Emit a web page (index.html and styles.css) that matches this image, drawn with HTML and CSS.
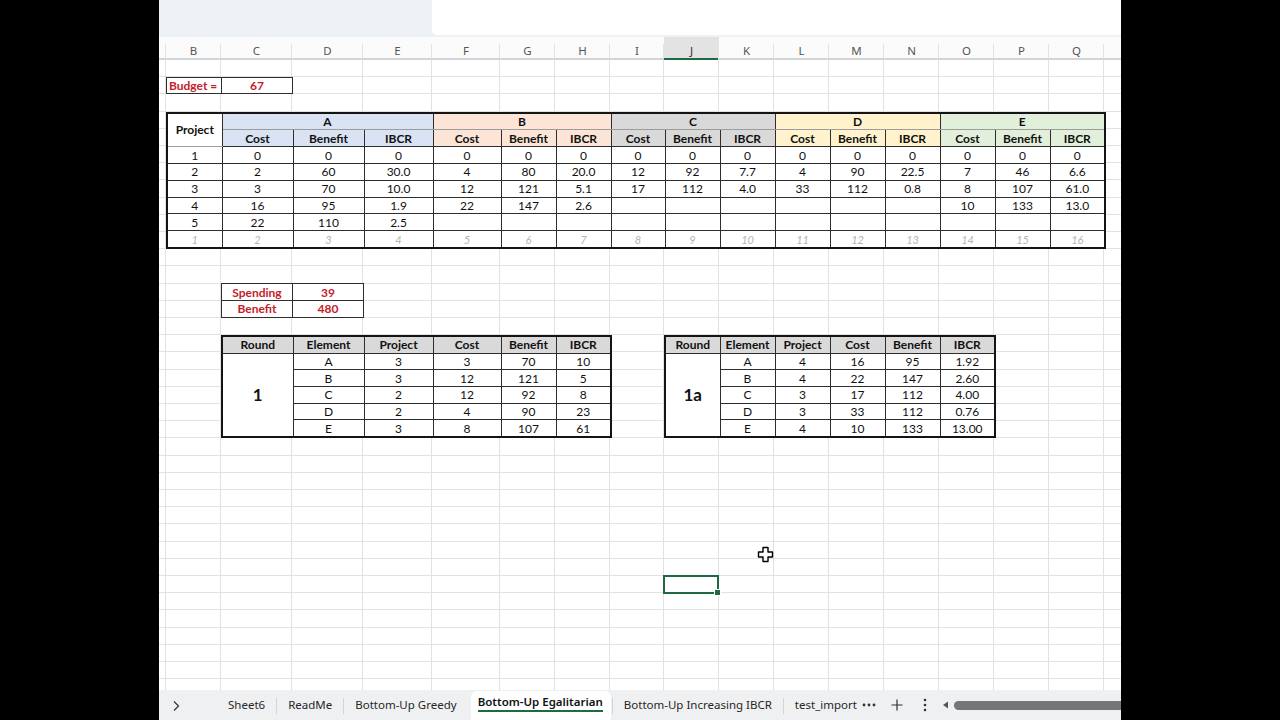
FILE: index.html
```html
<!DOCTYPE html>
<html>
<head>
<meta charset="utf-8">
<link rel="stylesheet" href="styles.css">
</head>
<body>
<div class="app">
  <div class="topbar"><div class="topbox"></div></div>
  <div class="colhead">
    <span></span><span>B</span><span>C</span><span>D</span><span>E</span><span>F</span><span>G</span><span>H</span><span>I</span><span class="cur">J</span><span>K</span><span>L</span><span>M</span><span>N</span><span>O</span><span>P</span><span>Q</span><span class="last"></span>
  </div>
  <div class="sheet">
    <table class="t budget">
      <colgroup><col class="w55"><col class="w71"></colgroup>
      <tr><td class="red left">Budget =</td><td class="red">67</td></tr>
    </table>

    <table class="t big main">
      <colgroup>
        <col class="w55"><col class="w71"><col class="w71"><col class="w69"><col class="w68"><col class="w55"><col class="w55"><col class="w54">
        <col class="w55"><col class="w55"><col class="w55"><col class="w55"><col class="w55"><col class="w55"><col class="w55"><col class="w55">
      </colgroup>
      <tr class="grp">
        <th rowspan="2" class="proj">Project</th>
        <th colspan="3" class="ca">A</th><th colspan="3" class="cb">B</th><th colspan="3" class="cc">C</th><th colspan="3" class="cd">D</th><th colspan="3" class="ce">E</th>
      </tr>
      <tr class="sub">
        <th class="ca">Cost</th><th class="ca">Benefit</th><th class="ca">IBCR</th>
        <th class="cb">Cost</th><th class="cb">Benefit</th><th class="cb">IBCR</th>
        <th class="cc">Cost</th><th class="cc">Benefit</th><th class="cc">IBCR</th>
        <th class="cd">Cost</th><th class="cd">Benefit</th><th class="cd">IBCR</th>
        <th class="ce">Cost</th><th class="ce">Benefit</th><th class="ce">IBCR</th>
      </tr>
      <tr><td>1</td><td>0</td><td>0</td><td>0</td><td>0</td><td>0</td><td>0</td><td>0</td><td>0</td><td>0</td><td>0</td><td>0</td><td>0</td><td>0</td><td>0</td><td>0</td></tr>
      <tr><td>2</td><td>2</td><td>60</td><td>30.0</td><td>4</td><td>80</td><td>20.0</td><td>12</td><td>92</td><td>7.7</td><td>4</td><td>90</td><td>22.5</td><td>7</td><td>46</td><td>6.6</td></tr>
      <tr><td>3</td><td>3</td><td>70</td><td>10.0</td><td>12</td><td>121</td><td>5.1</td><td>17</td><td>112</td><td>4.0</td><td>33</td><td>112</td><td>0.8</td><td>8</td><td>107</td><td>61.0</td></tr>
      <tr><td>4</td><td>16</td><td>95</td><td>1.9</td><td>22</td><td>147</td><td>2.6</td><td></td><td></td><td></td><td></td><td></td><td></td><td>10</td><td>133</td><td>13.0</td></tr>
      <tr><td>5</td><td>22</td><td>110</td><td>2.5</td><td></td><td></td><td></td><td></td><td></td><td></td><td></td><td></td><td></td><td></td><td></td><td></td></tr>
      <tr class="idx"><td>1</td><td>2</td><td>3</td><td>4</td><td>5</td><td>6</td><td>7</td><td>8</td><td>9</td><td>10</td><td>11</td><td>12</td><td>13</td><td>14</td><td>15</td><td>16</td></tr>
    </table>

    <table class="t spend">
      <colgroup><col class="w71"><col class="w71"></colgroup>
      <tr><td class="red">Spending</td><td class="red">39</td></tr>
      <tr><td class="red">Benefit</td><td class="red">480</td></tr>
    </table>

    <table class="t big round r1">
      <colgroup><col class="w71"><col class="w71"><col class="w69"><col class="w68"><col class="w55"><col class="w55"></colgroup>
      <tr class="rh"><th>Round</th><th>Element</th><th>Project</th><th>Cost</th><th>Benefit</th><th>IBCR</th></tr>
      <tr><td rowspan="5" class="rnum">1</td><td>A</td><td>3</td><td>3</td><td>70</td><td>10</td></tr>
      <tr><td>B</td><td>3</td><td>12</td><td>121</td><td>5</td></tr>
      <tr><td>C</td><td>2</td><td>12</td><td>92</td><td>8</td></tr>
      <tr><td>D</td><td>2</td><td>4</td><td>90</td><td>23</td></tr>
      <tr><td>E</td><td>3</td><td>8</td><td>107</td><td>61</td></tr>
    </table>

    <table class="t big round r2">
      <colgroup><col class="w55"><col class="w55"><col class="w55"><col class="w55"><col class="w55"><col class="w55"></colgroup>
      <tr class="rh"><th>Round</th><th>Element</th><th>Project</th><th>Cost</th><th>Benefit</th><th>IBCR</th></tr>
      <tr><td rowspan="5" class="rnum">1a</td><td>A</td><td>4</td><td>16</td><td>95</td><td>1.92</td></tr>
      <tr><td>B</td><td>4</td><td>22</td><td>147</td><td>2.60</td></tr>
      <tr><td>C</td><td>3</td><td>17</td><td>112</td><td>4.00</td></tr>
      <tr><td>D</td><td>3</td><td>33</td><td>112</td><td>0.76</td></tr>
      <tr><td>E</td><td>4</td><td>10</td><td>133</td><td>13.00</td></tr>
    </table>

    <div class="sel"></div>

    <svg class="cursor" width="17" height="17" viewBox="0 0 17 17"><path d="M6 1.5H11V6H15.5V11H11V15.5H6V11H1.5V6H6Z" fill="#fff" stroke="#000" stroke-width="1.4" stroke-linejoin="round"/></svg>
  </div>
  <div class="tabs">
    <div class="nav"><svg width="10" height="12" viewBox="0 0 10 12"><path d="M3 1.5L7.5 6L3 10.5" fill="none" stroke="#333" stroke-width="1.2"/></svg></div>
    <div class="tab">Sheet6</div><i class="sep"></i>
    <div class="tab">ReadMe</div><i class="sep"></i>
    <div class="tab">Bottom-Up Greedy</div>
    <div class="tab active"><span>Bottom-Up Egalitarian</span></div><i class="sep"></i>
    <div class="tab">Bottom-Up Increasing IBCR</div><i class="sep"></i>
    <div class="tab">test_import</div>
    <div class="tool dots"><svg width="14" height="4" viewBox="0 0 14 4"><circle cx="2" cy="2" r="1.4" fill="#333"/><circle cx="7" cy="2" r="1.4" fill="#333"/><circle cx="12" cy="2" r="1.4" fill="#333"/></svg></div>
    <div class="tool plus"><svg width="12" height="12" viewBox="0 0 12 12"><path d="M6 0.5V11.5M0.5 6H11.5" stroke="#333" stroke-width="1.2"/></svg></div>
    <div class="tool vdots"><svg width="4" height="14" viewBox="0 0 4 14"><circle cx="2" cy="2" r="1.3" fill="#333"/><circle cx="2" cy="7" r="1.3" fill="#333"/><circle cx="2" cy="12" r="1.3" fill="#333"/></svg></div>
    <div class="scroll">
      <svg width="8" height="8" viewBox="0 0 8 8"><path d="M6 0.5V7.5L1 4Z" fill="#555"/></svg>
      <div class="thumb"></div>
    </div>
  </div>
</div>
</body>
</html>
```
FILE: styles.css
```css
* { box-sizing: border-box; margin: 0; padding: 0; }
:root {
  --cols: 7px 55px 71px 71px 69px 68px 55px 55px 54px 55px 55px 55px 55px 55px 55px 55px 55px 17px;
  --grid: #e2e2e2;
}
body { margin: 0; background: #000; font-family: Lato, "Liberation Sans", sans-serif; }
.app {
  margin-left: 159px; width: 962px; height: 720px; background: #fff;
  display: flex; flex-direction: column; overflow: hidden; position: relative;
}
.topbar { height: 37px; background: #eef1f5; display: flex; justify-content: flex-end; flex: none; }
.topbox { width: 689px; height: 35px; background: #fff; border-bottom-left-radius: 5px; }

.colhead {
  height: 23px; flex: none; display: grid; grid-template-columns: var(--cols);
  background: #fbfbfb; border-bottom: 2px solid #d3d5d8;
}
.colhead span {
  position: relative; display: flex; justify-content: center; align-items: center;
  padding-top: 6px; font-family: "Noto Sans", "Open Sans", sans-serif; font-size: 11.5px; color: #555;
}
.colhead span::after {
  content: ""; position: absolute; right: 0; top: 7px; bottom: 0; width: 1px; background: #e3e3e3;
}
.colhead span.last::after { display: none; }
.colhead span.cur { background: #e3e3e3; color: #333; box-shadow: inset 0 -2px 0 #1e6b41; margin-bottom: -2px; padding-bottom: 2px; }

.sheet {
  height: 630px; flex: none; position: relative;
  display: grid; grid-template-columns: var(--cols); grid-template-rows: repeat(37, 17.2px);
  background:
    linear-gradient(var(--grid), var(--grid)) 6px 0 / 1px 100% no-repeat,
    linear-gradient(var(--grid), var(--grid)) 61px 0 / 1px 100% no-repeat,
    linear-gradient(var(--grid), var(--grid)) 132px 0 / 1px 100% no-repeat,
    linear-gradient(var(--grid), var(--grid)) 203px 0 / 1px 100% no-repeat,
    linear-gradient(var(--grid), var(--grid)) 272px 0 / 1px 100% no-repeat,
    linear-gradient(var(--grid), var(--grid)) 340px 0 / 1px 100% no-repeat,
    linear-gradient(var(--grid), var(--grid)) 395px 0 / 1px 100% no-repeat,
    linear-gradient(var(--grid), var(--grid)) 450px 0 / 1px 100% no-repeat,
    linear-gradient(var(--grid), var(--grid)) 504px 0 / 1px 100% no-repeat,
    linear-gradient(var(--grid), var(--grid)) 559px 0 / 1px 100% no-repeat,
    linear-gradient(var(--grid), var(--grid)) 614px 0 / 1px 100% no-repeat,
    linear-gradient(var(--grid), var(--grid)) 669px 0 / 1px 100% no-repeat,
    linear-gradient(var(--grid), var(--grid)) 724px 0 / 1px 100% no-repeat,
    linear-gradient(var(--grid), var(--grid)) 779px 0 / 1px 100% no-repeat,
    linear-gradient(var(--grid), var(--grid)) 834px 0 / 1px 100% no-repeat,
    linear-gradient(var(--grid), var(--grid)) 889px 0 / 1px 100% no-repeat,
    linear-gradient(var(--grid), var(--grid)) 944px 0 / 1px 100% no-repeat,
    repeating-linear-gradient(to bottom, transparent 0, transparent 16.2px, var(--grid) 16.2px, var(--grid) 17.2px),
    #fff;
}

.w54 { width: 54px; } .w55 { width: 55px; } .w68 { width: 68px; } .w69 { width: 69px; } .w71 { width: 71px; }

.t {
  border-collapse: collapse; table-layout: fixed; width: 100%; height: 100%;
  font-size: 12px; color: #111; background: #fff; border: 1px solid #1a1a1a;
}
.t td, .t th {
  border: 1px solid #2e2e2e; text-align: center; padding: 0; line-height: 13px;
  white-space: nowrap; overflow: hidden; font-weight: 400;
}
.t th { font-weight: 700; }
.big { border: 2px solid #141414; }

.budget { grid-column: 2 / 4; grid-row: 2; }
.main { grid-column: 2 / 18; grid-row: 4 / 12; }
.spend { grid-column: 3 / 5; grid-row: 14 / 16; }
.r1 { grid-column: 3 / 9; grid-row: 17 / 23; }
.r2 { grid-column: 10 / 16; grid-row: 17 / 23; }

.t td.red { color: #c3222a; font-weight: 700; }
.t td.left { text-align: left; padding-left: 2px; }

.ca { background: #dae3f3; }
.cb { background: #fce4d6; }
.cc { background: #d9d9d9; }
.cd { background: #fff2cc; }
.ce { background: #e2efda; }
.main .grp th { border-bottom-color: #9c9c9c; }
.main .proj { background: #fff; border-bottom-color: #2e2e2e; }
.idx td { color: #b4b4b4; font-style: italic; font-size: 11px; }

.round .rh th { background: #d9d9d9; }
.t td.rnum { font-size: 17px; font-weight: 700; background: #fff; }

.sel {
  grid-column: 10; grid-row: 31; margin: -1px 0 -1px -1px;
  border: 2px solid #1e6b41; position: relative;
}
.sel::after {
  content: ""; position: absolute; right: -4px; bottom: -4px; width: 5px; height: 5px;
  background: #1e6b41; border: 1px solid #fff;
}
.cursor { position: absolute; left: 598px; top: 486px; }

.tabs {
  flex: 1; display: flex; align-items: stretch; background: #eff0f2;
  font-family: "Noto Sans", "Open Sans", sans-serif; font-size: 11.5px; color: #262626;
  padding-top: 1px;
}
.nav { width: 58px; display: flex; align-items: center; padding-left: 12px; }
.tab { display: flex; align-items: center; padding: 0 11px 2px; white-space: nowrap; }
.sep { width: 1px; height: 16px; background: #d3d4d6; align-self: center; }
.tab.active {
  background: #fff; border-radius: 6px 6px 0 0; padding: 3px 8px 0 7px; margin: 0 1px 0 3px;
  color: #111; font-weight: 600; align-items: flex-start;
}
.tab.active span { display: block; border-bottom: 2px solid #1e6b41; padding-bottom: 1px; line-height: 15px; }
.tool { display: flex; align-items: center; justify-content: center; padding-bottom: 1px; }
.dots { width: 14px; margin-left: -6px; }
.plus { width: 30px; margin-left: 6px; }
.vdots { width: 26px; }
.scroll { flex: 1; display: flex; align-items: center; gap: 4px; padding-left: 4px; padding-bottom: 1px; }
.thumb { flex: 1; height: 9px; background: #767676; border-radius: 5px 0 0 5px; }
```
